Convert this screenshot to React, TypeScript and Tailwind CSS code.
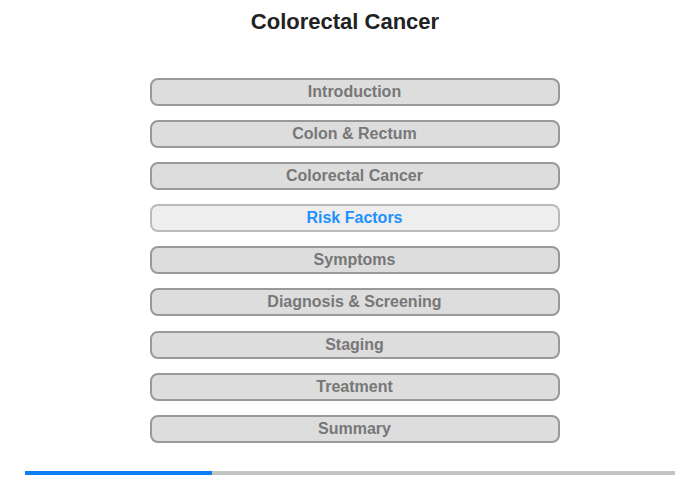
const sections = [
  "Introduction",
  "Colon & Rectum",
  "Colorectal Cancer",
  "Risk Factors",
  "Symptoms",
  "Diagnosis & Screening",
  "Staging",
  "Treatment",
  "Summary",
];

const current = "Risk Factors";
const progress = 187 / 650;

export default function App() {
  return (
    <div className="flex h-[480px] w-[700px] flex-col items-center bg-white font-['Liberation_Sans',Arial,sans-serif]">
      <h1 className="mt-[9px] h-[26px] pr-[10px] text-[22px] font-bold leading-[26px] text-[#222]">
        Colorectal Cancer
      </h1>
      <nav className="mt-[43px] ml-[9px] flex flex-col gap-[14.1px]">
        {sections.map((label) => {
          const active = label === current;
          return (
            <button
              key={label}
              className={
                active
                  ? "h-[28px] w-[410px] rounded-[8px] border-2 border-[#bbb] bg-[#eee] text-[16px] font-bold leading-[24px] text-[#1e90ff]"
                  : "h-[28px] w-[410px] rounded-[8px] border-2 border-[#999] bg-[#ddd] text-[16px] font-bold leading-[24px] text-[#777]"
              }
            >
              {label}
            </button>
          );
        })}
      </nav>
      <div className="mt-[28px] flex h-[4px] w-[650px] bg-[#c3c3c3]">
        <div className="h-full bg-[#0a7ff5]" style={{ width: `${progress * 100}%` }} />
      </div>
    </div>
  );
}
